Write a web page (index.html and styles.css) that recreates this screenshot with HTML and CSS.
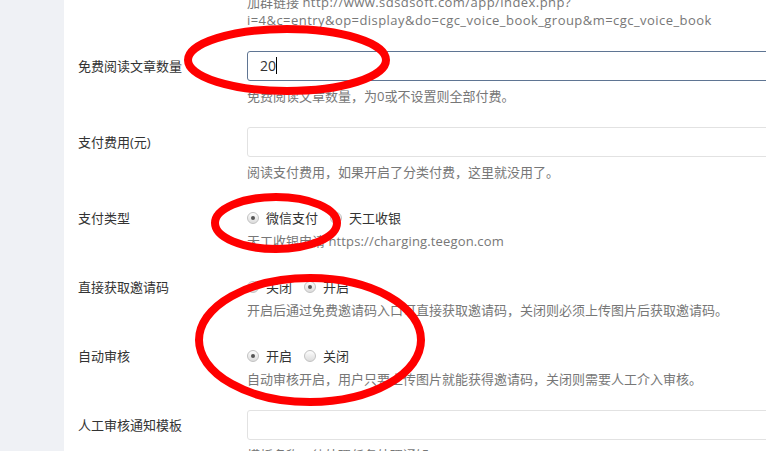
FILE: index.html
```html
<!DOCTYPE html>
<html lang="zh-CN">

<head>
    <meta charset="UTF-8">
    <title>阅读设置</title>
    <link rel="stylesheet" href="styles.css">
</head>

<body>
    <div class="page">
        <!-- left menu strip -->
        <aside class="sidebar"></aside>

        <main class="content">
            <div class="form-group first">
                <div class="label"></div>
                <div class="field">
                    <p class="help">加群链接 <span class="url">http://www.sdsdsoft.com/app/index.php?<br>i=4&amp;c=entry&amp;op=display&amp;do=cgc_voice_book_group&amp;m=cgc_voice_book</span></p>
                </div>
            </div>

            <div class="form-group">
                <div class="label">免费阅读文章数量</div>
                <div class="field">
                    <div class="input focus">20<span class="caret"></span></div>
                    <p class="help">免费阅读文章数量，为0或不设置则全部付费。</p>
                </div>
            </div>

            <div class="form-group">
                <div class="label">支付费用(元)</div>
                <div class="field">
                    <div class="input"></div>
                    <p class="help">阅读支付费用，如果开启了分类付费，这里就没用了。</p>
                </div>
            </div>

            <div class="form-group">
                <div class="label">支付类型</div>
                <div class="field">
                    <div class="radios">
                        <label class="radio"><span class="dot checked"></span>微信支付</label>
                        <label class="radio"><span class="dot"></span>天工收银</label>
                    </div>
                    <p class="help">天工收银申请 <span class="link">https://charging.teegon.com</span></p>
                </div>
            </div>

            <div class="form-group">
                <div class="label">直接获取邀请码</div>
                <div class="field">
                    <div class="radios">
                        <label class="radio"><span class="dot"></span>关闭</label>
                        <label class="radio"><span class="dot checked"></span>开启</label>
                    </div>
                    <p class="help">开启后通过免费邀请码入口可直接获取邀请码，关闭则必须上传图片后获取邀请码。</p>
                </div>
            </div>

            <div class="form-group">
                <div class="label">自动审核</div>
                <div class="field">
                    <div class="radios">
                        <label class="radio"><span class="dot checked"></span>开启</label>
                        <label class="radio"><span class="dot"></span>关闭</label>
                    </div>
                    <p class="help">自动审核开启，用户只要上传图片就能获得邀请码，关闭则需要人工介入审核。</p>
                </div>
            </div>

            <div class="form-group">
                <div class="label">人工审核通知模板</div>
                <div class="field">
                    <div class="input"></div>
                    <p class="help">模板名称：待处理任务处理通知</p>
                </div>
            </div>
        </main>

        <!-- red hand-drawn marks on top of the screenshot -->
        <svg class="marks" width="766" height="451" viewBox="0 0 766 451">
            <ellipse cx="287" cy="60" rx="99" ry="31" />
            <ellipse cx="276" cy="223" rx="61" ry="26" />
            <ellipse cx="310" cy="340" rx="111" ry="62" />
        </svg>
    </div>
</body>

</html>
```

FILE: styles.css
```css
* {
    margin: 0;
    padding: 0;
    box-sizing: border-box;
}

body {
    font-family: "Open Sans", "Noto Sans CJK SC", sans-serif;
    font-size: 13px;
    color: #333;
    background: #fff;
    overflow: hidden;
}

.page {
    position: relative;
    display: flex;
    width: 766px;
    height: 451px;
    overflow: hidden;
}

.sidebar {
    width: 64px;
    flex-shrink: 0;
    background: #eff1f5;
}

.content {
    flex: 1;
    padding-left: 14px;
}

.form-group {
    display: flex;
    margin-bottom: 22px;
}

.form-group.first {
    margin-top: -7px;
}

.label {
    width: 169px;
    flex-shrink: 0;
    line-height: 30px;
}

.field {
    width: 560px;
    flex-shrink: 0;
}

.input {
    height: 30px;
    border: 1px solid #e2e2e2;
    border-radius: 3px;
    padding: 0 12px;
    line-height: 28px;
    font-size: 14px;
    color: #333;
}

.input.focus {
    border-color: #5f7593;
}

.caret {
    display: inline-block;
    width: 1px;
    height: 17px;
    background: #000;
    vertical-align: -3px;
}

.help {
    margin-top: 6px;
    line-height: 18px;
    color: #777;
}

.first .help {
    margin-top: 0;
}

/* latin text in the reference font runs wider */
.url {
    letter-spacing: 0.45px;
}

.link {
    letter-spacing: 0.15px;
}

.radios {
    display: flex;
    gap: 12px;
    padding-top: 2px;
    line-height: 26px;
}

.radio {
    display: flex;
    align-items: center;
    gap: 7px;
}

.dot {
    position: relative;
    width: 12px;
    height: 12px;
    border: 1px solid #c2c2c2;
    border-radius: 50%;
    background: linear-gradient(#fdfdfd, #dcdcdc);
}

.dot.checked::after {
    content: "";
    position: absolute;
    left: 3px;
    top: 3px;
    width: 4px;
    height: 4px;
    border-radius: 50%;
    background: #555;
}

.radios + .help {
    margin-top: 1px;
}

.marks {
    position: absolute;
    left: 0;
    top: 0;
    pointer-events: none;
}

.marks ellipse {
    fill: none;
    stroke: #f00;
    stroke-width: 8;
}
```
